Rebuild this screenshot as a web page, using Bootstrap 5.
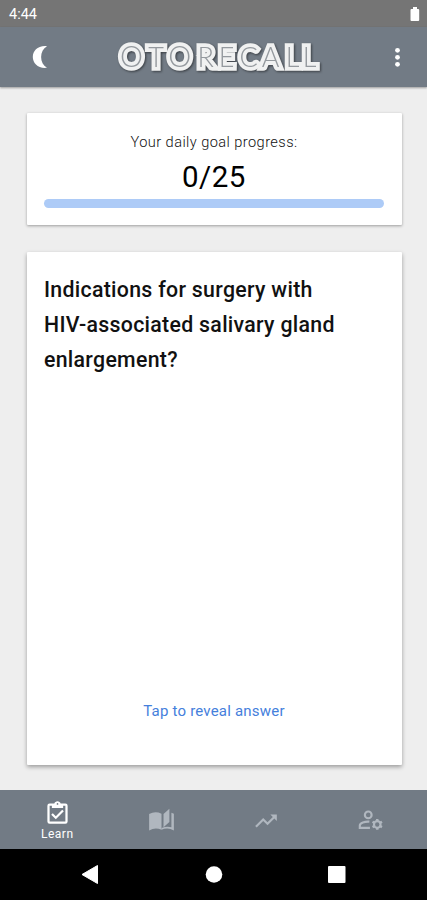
<!DOCTYPE html>
<html lang="en">
<head>
<meta charset="utf-8">
<meta name="viewport" content="width=device-width, initial-scale=1">
<title>OtoRecall</title>
<link rel="stylesheet" href="https://cdn.jsdelivr.net/npm/bootstrap@5.3.0/dist/css/bootstrap.min.css">
<style>
  body { font-family: Roboto, "Liberation Sans", sans-serif; background: #eee; color: #111; }
  svg { display: block; }
  .screen { height: 900px; overflow: hidden; }
  .status-bar { height: 27px; background: #757575; font-size: 14.5px; padding: 2px 7px 0 9px; }
  .app-bar { height: 59.5px; background: #727b85; box-shadow: 0 1px 2px rgba(0,0,0,.35); padding: 0 22px 0 30px; }
  .brand-text { font-family: Lato, sans-serif; font-weight: 300; font-size: 27px; fill: #94999e; stroke: #f0f1f1; stroke-width: 7.6px; paint-order: stroke; text-anchor: middle; }
  .brand-round { font-size: 29px; }
  .brand-logo { filter: drop-shadow(1px 1px 1px rgba(0,0,0,.5)); }
  .content { padding: 26.5px 25px 25px 27px; gap: 27px; }
  .panel { border: 0; border-radius: 1px; box-shadow: 0 1px 3px rgba(0,0,0,.35); }
  .goal { height: 112px; padding: 19px 18px 0 17px; }
  .goal-label { font-size: 14.6px; line-height: 20px; font-weight: 300; color: #111; letter-spacing: .43px; }
  .goal-count { font-size: 29.5px; line-height: 38px; margin-top: 6px; letter-spacing: .5px; color: #000; }
  .goal-bar { height: 9px; border-radius: 5px; background: #adcbf7; margin-top: 3px; }
  .question { padding: 21px 18px 43px 17px; box-shadow: 0 2px 4px rgba(0,0,0,.35); }
  .question-text { font-size: 21.3px; line-height: 34.8px; font-weight: 500; letter-spacing: .3px; }
  .reveal { font-size: 15px; line-height: 22px; color: #4580dc; text-decoration: none; letter-spacing: .2px; }
  .tabs { height: 59px; background: #727b85; padding: 0 4px 0 5px; }
  .tab { flex: 1 1 0; color: #b0b7bf; text-decoration: none; padding-top: 2px; }
  .tab-active { color: #fff; font-size: 12px; line-height: 15px; letter-spacing: .5px; }
  .system-bar { height: 51px; background: #000; }
</style>
</head>
<body>
<div class="screen d-flex flex-column">
  <div class="status-bar d-flex justify-content-between align-items-center text-white flex-shrink-0">
    <span>4:44</span>
    <svg width="10" height="15" viewBox="0 0 10 15" fill="#fff"><path d="M3 0h4v2h1.200a1 1 0 0 1 1 1v10a1 1 0 0 1-1 1H1.500a1 1 0 0 1-1-1V3a1 1 0 0 1 1-1H3z"/></svg>
  </div>
  <header class="app-bar d-flex justify-content-between align-items-center flex-shrink-0">
    <svg width="18" height="24" viewBox="0 0 18 24" fill="#fff"><path d="M17 1.200C8 .2 2.800 5.800 2.800 12S8 23.800 17 22.800C9.200 18.500 9.200 5.500 17 1.200z"/></svg>
    <svg class="brand-logo" width="216" height="44" viewBox="110 34 216 44" role="img" aria-label="OTORECALL">
      <text class="brand-text" y="65.500"><tspan class="brand-round" x="130.500" y="66">O</tspan><tspan x="155" y="65.500">T</tspan><tspan class="brand-round" x="178.800" y="66">O</tspan><tspan x="204.800 225.500 247.700 269.500 291.500 308.500" y="65.500">RECALL</tspan></text>
    </svg>
    <svg width="16" height="22" viewBox="0 0 16 22" fill="#fff"><circle cx="8.500" cy="4.300" r="2.400"/><circle cx="8.500" cy="11.300" r="2.400"/><circle cx="8.500" cy="18.300" r="2.400"/></svg>
  </header>
  <main class="content d-flex flex-column flex-grow-1">
    <section class="card panel goal text-center flex-shrink-0">
      <div class="goal-label">Your daily goal progress:</div>
      <div class="goal-count">0/25</div>
      <div class="goal-bar" role="progressbar" aria-valuenow="0" aria-valuemin="0" aria-valuemax="25"></div>
    </section>
    <section class="card panel question flex-grow-1 d-flex flex-column justify-content-between">
      <div class="question-text">Indications for surgery with<br>HIV-associated salivary gland<br>enlargement?</div>
      <a href="#" class="reveal text-center">Tap to reveal answer</a>
    </section>
  </main>
  <nav class="tabs d-flex flex-shrink-0">
    <a href="#" class="tab tab-active d-flex flex-column align-items-center justify-content-center">
      <svg width="27" height="27" viewBox="0 0 24 24" fill="currentColor"><path fill-rule="evenodd" d="M19 3h-4.180C14.400 1.840 13.300 1 12 1s-2.400.84-2.820 2H5a2 2 0 0 0-2 2v14a2 2 0 0 0 2 2h14a2 2 0 0 0 2-2V5a2 2 0 0 0-2-2zm-7-.25a.75.75 0 1 1 0 1.500.75.75 0 0 1 0-1.500zM19 19H5V5h2v2h10V5h2z"/><path d="M16.200 8.700l-5.700 5.700-2.700-2.700-1.400 1.400 4.100 4.100 7.100-7.100z"/></svg>
      <span>Learn</span>
    </a>
    <a href="#" class="tab d-flex align-items-center justify-content-center" aria-label="Library">
      <svg width="27" height="27" viewBox="0 0 24 24" fill="currentColor"><path d="M1 6.200Q6.500 3.300 12 6V20.300Q6.500 17.700 1 20.800z"/><path d="M19 1.500v11.800l-5.200 4.700V6.200z"/><path d="M20.800 5q1.200.4 2.200 1v14.800Q17.500 17.700 12 20.300v-1.700Q17 16.800 20.800 18z"/></svg>
    </a>
    <a href="#" class="tab d-flex align-items-center justify-content-center" aria-label="Progress">
      <svg width="26" height="26" viewBox="0 0 24 24" fill="currentColor"><path d="M16 6l2.290 2.290-4.880 4.880-4-4L2 16.590 3.410 18l6-6 4 4 6.300-6.290L22 12V6z"/></svg>
    </a>
    <a href="#" class="tab d-flex align-items-center justify-content-center" aria-label="Account settings">
      <svg width="27" height="27" viewBox="0 0 24 24" fill="none" stroke="currentColor" stroke-width="1.900"><circle cx="10" cy="7" r="3"/><path d="M11 13C7 12.700 2.500 14 2.500 16.500V18.500h9"/><circle cx="18" cy="15.500" r="2.900"/><path stroke-width="2.200" d="M18 10.700v2M18 18.300v2M13.800 13.100l1.800 1M20.400 16.900l1.800 1M13.800 17.900l1.800-1M20.400 14.100l1.800-1"/></svg>
    </a>
  </nav>
  <div class="system-bar flex-shrink-0">
    <svg width="427" height="51" viewBox="0 849 427 51" fill="#fff"><path d="M82 874.500L97.500 865.500V883.500z" stroke="#fff" stroke-linejoin="round"/><circle cx="214" cy="874.500" r="8.300"/><rect x="328" y="866" width="17.500" height="17" rx="1"/></svg>
  </div>
</div>
<script src="https://cdn.jsdelivr.net/npm/bootstrap@5.3.0/dist/js/bootstrap.bundle.min.js"></script>
</body>
</html>
